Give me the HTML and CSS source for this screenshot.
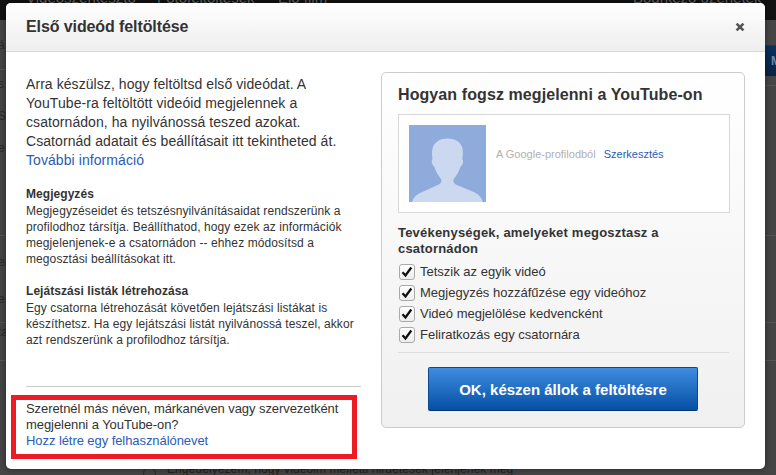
FILE: index.html
```html
<!DOCTYPE html>
<html lang="hu">
<head>
<meta charset="utf-8">
<title>Első videód feltöltése</title>
<link rel="stylesheet" href="styles.css">
</head>
<body>
<div class="backdrop">
  <div class="topnav">
    <span class="nav-a">Videószerkesztő</span>
    <span class="nav-b">Fotófeltöltések</span>
    <span class="nav-c">Élő film</span>
    <span class="nav-d">Bodrkező üzenetek</span>
  </div>
  <div class="stripe stripe-a"></div>
  <div class="stripe stripe-b"></div>
  <div class="stripe stripe-c"></div>
  <div class="stripe stripe-d"></div>
  <div class="stripe stripe-e"></div>
  <div class="side-blue">M</div>
  <div class="side-a">á</div>
  <div class="side-b">s</div>
  <div class="side-c">S</div>
  <div class="side-d">e</div>
  <div class="side-e">eá</div>
  <div class="side-f">e</div>
  <div class="side-g">ta</div>
  <div class="radio"></div>
  <div class="under">Engedélyezem, hogy videóim melletti hirdetések jelenjenek meg</div>
</div>

<div class="modal">
  <header class="modal-head">
    <h1 class="modal-title">Első videód feltöltése</h1>
    <svg class="close" viewBox="0 0 10 10" width="10" height="10"><path d="M1.600 1.600l6.800 6.800M8.400 1.600l-6.800 6.800"/></svg>
  </header>
  <div class="modal-body">
    <div class="left">
      <div class="left-main">
        <p class="intro">Arra készülsz, hogy feltöltsd első videódat. A YouTube-ra feltöltött videóid megjelennek a csatornádon, ha nyilvánossá teszed azokat. Csatornád adatait és beállításait itt tekintheted át. <a href="#">További információ</a></p>
        <h3 class="note-title">Megjegyzés</h3>
        <p class="note">Megjegyzéseidet és tetszésnyilvánításaidat rendszerünk a profilodhoz társítja. Beállíthatod, hogy ezek az információk megjelenjenek-e a csatornádon -- ehhez módosítsd a megosztási beállításokat itt.</p>
        <h3 class="note-title">Lejátszási listák létrehozása</h3>
        <p class="note">Egy csatorna létrehozását követően lejátszási listákat is készíthetsz. Ha egy lejátszási listát nyilvánossá teszel, akkor azt rendszerünk a profilodhoz társítja.</p>
      </div>
      <hr class="left-rule">
      <div class="callout">
        <p>Szeretnél más néven, márkanéven vagy szervezetként megjelenni a YouTube-on?<br><a href="#">Hozz létre egy felhasználónevet</a></p>
      </div>
    </div>
    <section class="panel">
      <h2 class="panel-title">Hogyan fogsz megjelenni a YouTube-on</h2>
      <div class="profile">
        <svg class="avatar" viewBox="0 0 77 77" width="77" height="77">
          <rect width="77" height="77" fill="#8eabdb"/>
          <path fill="#cbd8ef" d="M3 77c1-4 4-7 8-9l19-8.500c2-1 3-3 2-5.500-2-3-5-6-6-10.500-.3-2-2.500-3-3-5-.5-2-.2-3.500.5-4.500-.5-4-.7-7 0-10.500 1-5 6-10 15-10 8 0 14 4 15 10 .6 4 .3 7-.2 10.500.8 1 1 2.500.5 4.500-.5 2-2.500 3-3 5-1 4.500-4 7.500-6 10.500-1 2.500 0 4.500 2 5.500l19 8c4 2 7 5 8 9.500z"/>
        </svg>
        <span class="profile-src">A Google-profilodból</span>
        <a class="profile-edit" href="#">Szerkesztés</a>
      </div>
      <h3 class="share-title">Tevékenységek, amelyeket megosztasz a csatornádon</h3>
      <ul class="checks">
        <li class="check"><span class="box"><svg viewBox="0 0 16 16" width="16" height="16"><path d="M3.500 8.200l3 3.300 5.800-8"/></svg></span>Tetszik az egyik videó</li>
        <li class="check"><span class="box"><svg viewBox="0 0 16 16" width="16" height="16"><path d="M3.500 8.200l3 3.300 5.800-8"/></svg></span>Megjegyzés hozzáfűzése egy videóhoz</li>
        <li class="check"><span class="box"><svg viewBox="0 0 16 16" width="16" height="16"><path d="M3.500 8.200l3 3.300 5.800-8"/></svg></span>Videó megjelölése kedvencként</li>
        <li class="check"><span class="box"><svg viewBox="0 0 16 16" width="16" height="16"><path d="M3.500 8.200l3 3.300 5.800-8"/></svg></span>Feliratkozás egy csatornára</li>
      </ul>
      <div class="panel-foot">
        <button class="ok" type="button">OK, készen állok a feltöltésre</button>
      </div>
    </section>
  </div>
</div>
</body>
</html>
```

FILE: styles.css
```css
* { box-sizing: border-box; }
html, body { margin: 0; height: 100%; }
body {
  width: 776px;
  height: 475px;
  overflow: hidden;
  position: relative;
  background: #454545;
  font-family: "Liberation Sans", Arial, sans-serif;
  color: #333;
}
a { color: #2b5cb5; text-decoration: none; }
p, h1, h2, h3, ul { margin: 0; padding: 0; }

.backdrop { position: absolute; inset: 0; overflow: hidden; color: #2a2a2a; font-size: 13px; }
.topnav {
  height: 20px;
  background: #121212;
  color: #666;
  font-size: 15px;
  position: relative;
  overflow: hidden;
}
.topnav span { position: absolute; top: -11px; white-space: nowrap; }
.nav-a { left: 26px; }
.nav-b { left: 157px; }
.nav-c { left: 278px; }
.nav-d { left: 633px; }
.stripe { position: absolute; left: 0; right: 0; height: 1px; background: #555; }
.stripe-a { top: 69px; }
.stripe-b { top: 85px; }
.stripe-c { top: 235px; }
.stripe-d { top: 322px; }
.stripe-e { top: 360px; }
.side-blue {
  position: absolute; left: 765px; top: 45px; width: 11px; height: 31px;
  background: linear-gradient(#0c2f5e, #0a2343);
  border-top: 1px solid #333;
  color: #6f86a5; font-weight: bold; font-size: 12px; line-height: 30px; padding-left: 6px;
}
.side-a, .side-b, .side-c, .side-d, .side-e, .side-f, .side-g { position: absolute; left: -2px; font-size: 12px; }
.side-a { top: 38px; }
.side-b { top: 77px; }
.side-c { top: 109px; }
.side-d { top: 141px; }
.side-e { top: 255px; }
.side-f { top: 292px; }
.side-g { top: 325px; }
.radio { position: absolute; left: 143px; top: 467px; width: 13px; height: 13px; border: 1px solid #2a2a2a; border-radius: 50%; }
.under { position: absolute; left: 167px; top: 462px; white-space: nowrap; font-size: 12px; color: #222; letter-spacing: 0.09px; }

.modal {
  position: absolute;
  left: 6px;
  top: 3px;
  width: 759px;
  height: 466px;
  background: #fff;
  border-radius: 5px;
  box-shadow: 0 0 6px rgba(0, 0, 0, 0.45);
  display: flex;
  flex-direction: column;
}
.modal-head {
  height: 49px;
  flex: none;
  display: flex;
  align-items: center;
  justify-content: space-between;
  padding: 0 20px 1px 20px;
  background: linear-gradient(#fff, #eee);
  border-bottom: 1px solid #d8d8d8;
  border-radius: 5px 5px 0 0;
}
.modal-title { font-size: 16px; font-weight: bold; color: #333; letter-spacing: -0.1px; }
.close { fill: none; stroke: #555; stroke-width: 2.600; }

.modal-body {
  flex: 1;
  display: flex;
  padding: 20px 20px 0 20px;
  justify-content: space-between;
}
.left { width: 335px; display: flex; flex-direction: column; }
.left-main { flex: 1; padding-top: 3px; }
.intro { font-size: 14px; line-height: 19px; width: 322px; letter-spacing: 0.07px; }
.note-title { font-size: 12px; line-height: 16px; font-weight: bold; margin: 16px 0 1px; letter-spacing: 0.05px; }
.note { font-size: 12px; line-height: 16px; width: 335px; letter-spacing: 0.09px; }
.left-rule { border: 0; border-top: 1px solid #ccc; margin: 0; }
.callout {
  margin: 8px 4px 10px -15px;
  width: 346px;
  height: 64px;
  border: 5px solid #ed1c24;
  padding: 1px 10px 0 10px;
  font-size: 13px;
  line-height: 16px;
  letter-spacing: -0.07px;
}

.panel {
  width: 364px;
  height: 356px;
  border: 1px solid #ccc;
  border-radius: 5px;
  background: linear-gradient(#fff, #f0f0f0);
  padding: 11px 16px 0 16px;
}
.panel-title { font-size: 16px; line-height: 22px; font-weight: bold; color: #333; letter-spacing: 0.09px; }
.profile {
  margin-top: 8px;
  width: 332px;
  height: 99px;
  border: 1px solid #d8d8d8;
  background: #fff;
  padding: 10px;
  display: flex;
  align-items: flex-start;
  font-size: 11px;
}
.avatar { flex: none; }
.profile-src { color: #b0b0b0; margin: 23px 8px 0 10px; line-height: 13px; }
.profile-edit { margin-top: 23px; line-height: 13px; }
.share-title { margin-top: 12px; font-size: 13px; line-height: 16px; font-weight: bold; color: #333; width: 300px; letter-spacing: 0.2px; }
.checks { list-style: none; margin-top: 4px; }
.check {
  height: 21px;
  display: flex;
  align-items: center;
  font-size: 13px;
  color: #333;
}
.box {
  width: 16px;
  height: 16px;
  border: 1px solid #aaa;
  border-radius: 3px;
  background: linear-gradient(#fff, #eee);
  margin: 0 5px 0 1px;
  display: flex;
  align-items: center;
  justify-content: center;
  flex: none;
}
.box svg { flex: none; fill: none; stroke: #111; stroke-width: 2.300; }
.panel-foot {
  margin-top: 7px;
  width: 331px;
  border-top: 1px solid #ddd;
  padding: 14px 0 0 30px;
}
.ok {
  display: block;
  width: 270px;
  height: 44px;
  border: 1px solid #0a4a94;
  border-bottom-color: #04326b;
  border-radius: 2px;
  background: linear-gradient(#3f8ce0, #0550a6);
  color: #fff;
  font: bold 15px "Liberation Sans", Arial, sans-serif;
  padding: 0;
}
```
